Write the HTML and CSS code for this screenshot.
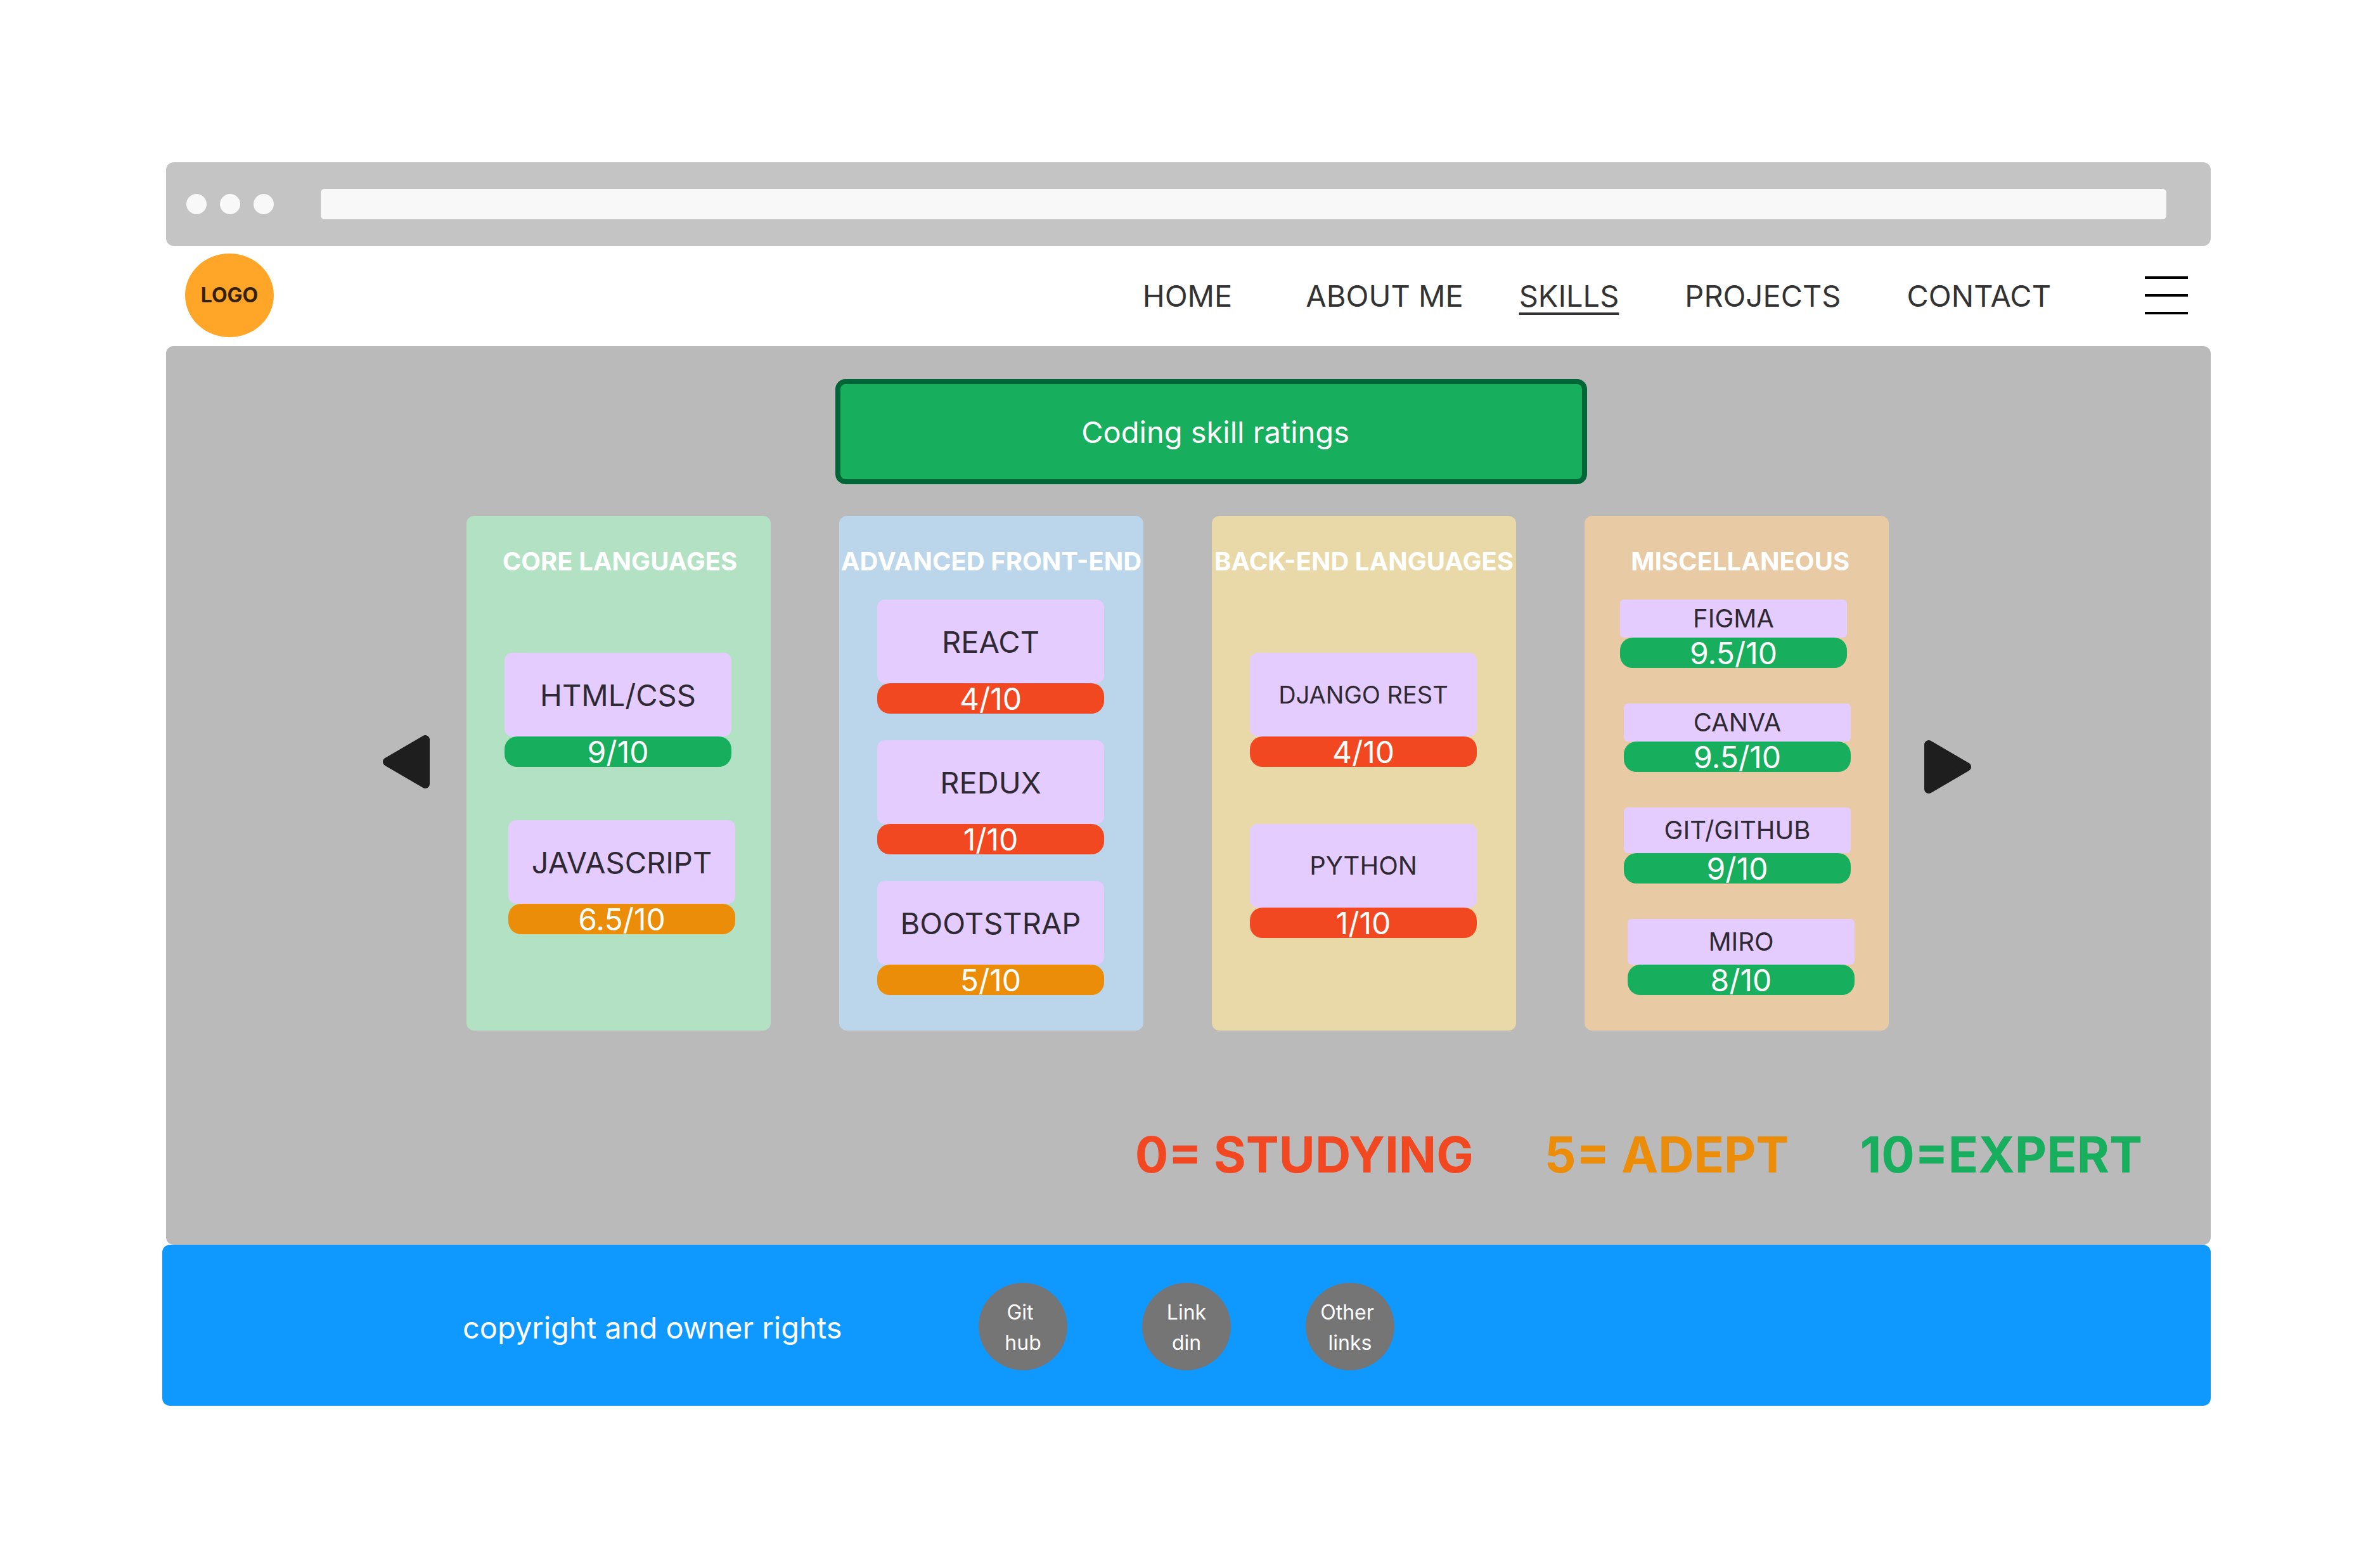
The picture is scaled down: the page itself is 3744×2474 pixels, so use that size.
FILE: index.html
```html
<!DOCTYPE html>
<html lang="en">
<head>
<meta charset="utf-8">
<title>Skills</title>
<link rel="stylesheet" href="styles.css">
</head>
<body>
<div class="window">
  <div class="browser-bar">
    <div class="dots"><span class="dot"></span><span class="dot"></span><span class="dot"></span></div>
    <input class="address" type="text" aria-label="Address">
  </div>

  <header class="header">
    <a class="logo" href="#">LOGO</a>
    <nav class="nav">
      <a class="nav-link nav-home" href="#">HOME</a>
      <a class="nav-link nav-about" href="#">ABOUT ME</a>
      <a class="nav-link active" href="#">SKILLS</a>
      <a class="nav-link" href="#">PROJECTS</a>
      <a class="nav-link" href="#">CONTACT</a>
    </nav>
    <button class="burger" type="button" aria-label="Menu"><span></span><span></span><span></span></button>
  </header>

  <main class="main">
    <h1 class="title">&nbsp;Coding skill ratings</h1>

    <div class="carousel">
      <button class="arrow prev" type="button" aria-label="Previous">
        <svg width="74" height="84" viewBox="0 0 74 84"><path d="M67 7V77L7 42Z" fill="#1e1e1e" stroke="#1e1e1e" stroke-width="14" stroke-linejoin="round"/></svg>
      </button>

      <div class="cards">
        <section class="card core">
          <h2 class="card-title">CORE LANGUAGES</h2>
          <div class="skill"><div class="name">HTML/CSS</div><div class="score high">9/10</div></div>
          <div class="skill end"><div class="name">JAVASCRIPT</div><div class="score mid">6.5/10</div></div>
        </section>

        <section class="card front">
          <h2 class="card-title">ADVANCED FRONT-END</h2>
          <div class="skill"><div class="name">REACT</div><div class="score low">4/10</div></div>
          <div class="skill"><div class="name">REDUX</div><div class="score low">1/10</div></div>
          <div class="skill"><div class="name">BOOTSTRAP</div><div class="score mid">5/10</div></div>
        </section>

        <section class="card back">
          <h2 class="card-title">BACK-END LANGUAGES</h2>
          <div class="skill"><div class="name long">DJANGO REST</div><div class="score low">4/10</div></div>
          <div class="skill"><div class="name">PYTHON</div><div class="score low">1/10</div></div>
        </section>

        <section class="card misc">
          <h2 class="card-title">&nbsp;MISCELLANEOUS</h2>
          <div class="skill"><div class="name short">FIGMA</div><div class="score high">9.5/10</div></div>
          <div class="skill center"><div class="name short">CANVA</div><div class="score high">9.5/10</div></div>
          <div class="skill center"><div class="name">GIT/GITHUB</div><div class="score high">9/10</div></div>
          <div class="skill end"><div class="name">MIRO</div><div class="score high">8/10</div></div>
        </section>
      </div>

      <button class="arrow next" type="button" aria-label="Next">
        <svg width="74" height="84" viewBox="0 0 74 84"><path d="M7 7V77L67 42Z" fill="#1e1e1e" stroke="#1e1e1e" stroke-width="14" stroke-linejoin="round"/></svg>
      </button>
    </div>

    <div class="legend">
      <span class="studying">0= STUDYING</span>
      <span class="adept">5= ADEPT</span>
      <span class="expert">10=EXPERT</span>
    </div>
  </main>

  <footer class="footer">
    <p class="copyright">copyright and owner rights</p>
    <div class="socials">
      <a class="social" href="#">Git&nbsp;<br>hub</a>
      <a class="social" href="#">Link<br>din</a>
      <a class="social" href="#">Other&nbsp;<br>links</a>
    </div>
  </footer>
</div>
</body>
</html>
```
FILE: styles.css
```css
* {
  box-sizing: border-box;
}

body {
  margin: 0;
  background: #fff;
  color: #333;
  font-family: Inter, "Liberation Sans", sans-serif;
  font-size: 47px;
  line-height: 48px;
}

h1, h2, p {
  margin: 0;
}

a {
  color: inherit;
  text-decoration: none;
}

button {
  padding: 0;
  border: 0;
  background: none;
  cursor: pointer;
}

.window {
  padding: 256px;
}

.browser-bar,
.header,
.main {
  margin-left: 6px;
}

/* Browser chrome */
.browser-bar {
  display: flex;
  align-items: center;
  gap: 74px;
  padding: 42px 70px 42px 32px;
  border-radius: 12px;
  background: #c4c4c4;
}

.dots {
  display: flex;
  gap: 21px;
}

.dot {
  width: 32px;
  height: 32px;
  border-radius: 50%;
  background: #f8f8f8;
}

.address {
  flex: 1;
  height: 48px;
  padding: 0 16px;
  border: 0;
  border-radius: 6px;
  background: #f8f8f8;
  font: inherit;
  font-size: 32px;
}

/* Site header */
.header {
  display: flex;
  align-items: center;
  padding: 12px 36px 14px 30px;
}

.logo {
  display: grid;
  place-items: center;
  width: 140px;
  height: 132px;
  border-radius: 50%;
  background: #ffa629;
  color: #33210a;
  font-size: 32px;
  font-weight: 700;
}

.nav {
  display: flex;
  gap: 104px;
  margin-left: auto;
  padding-top: 2px;
}

.nav-home {
  margin-right: 12px;
}

.nav-about {
  margin-right: -16px;
}

.active {
  text-decoration: underline;
  text-decoration-thickness: 4px;
  text-underline-offset: 9px;
}

.burger {
  display: grid;
  gap: 24px;
  width: 68px;
  margin-left: 148px;
}

.burger span {
  height: 4px;
  background: #000;
}

/* Skills panel */
.main {
  padding: 52px 0 94px;
  border-radius: 12px;
  background: #bababa;
}

.title {
  margin: 0 984px 50px 1056px;
  padding: 52px 0 50px;
  border: 8px solid #006637;
  border-radius: 16px;
  background: #17ae5d;
  color: #fff;
  font-size: 47px;
  font-weight: 400;
  text-align: center;
}

.carousel {
  display: flex;
  align-items: flex-start;
  padding: 0 378px 0 342px;
}

.arrow svg {
  display: block;
}

.prev {
  margin: 346px 58px 0 0;
}

.next {
  margin: 354px 0 0 56px;
}

.cards {
  display: grid;
  flex: 1;
  grid-template-columns: repeat(4, minmax(0, 1fr));
  gap: 108px;
}

.card {
  display: flex;
  flex-direction: column;
  align-items: flex-start;
  padding: 48px 60px 56px;
  border-radius: 12px;
}

.card-title {
  align-self: center;
  color: #fff;
  font-size: 40px;
  font-weight: 700;
  white-space: nowrap;
}

.core {
  gap: 84px;
  padding-right: 56px;
  background: #b2e2c3;
}

.front {
  gap: 42px;
  background: #bbd6ea;
}

.back {
  gap: 90px;
  background: #e9d9a8;
}

.misc {
  gap: 56px;
  padding-right: 54px;
  padding-left: 56px;
  background: #e8caa4;
}

.core .card-title {
  margin-bottom: 36px;
}

.back .card-title {
  margin-bottom: 30px;
}

.front .card-title {
  margin-bottom: -6px;
}

.misc .card-title {
  margin-bottom: -20px;
}

.skill {
  width: 358px;
  text-align: center;
}

.skill.center {
  align-self: center;
}

.skill.end {
  align-self: flex-end;
}

.name {
  padding: 43px 0 41px;
  border-radius: 12px;
  background: #e4ccff;
  color: #2f2933;
}

.back .name,
.misc .name {
  font-size: 40px;
}

.back .name {
  padding: 42px 0;
}

.back .long {
  font-size: 38px;
}

.misc .name {
  padding: 12px 0;
  border-radius: 6px;
}

.misc .short {
  padding: 6px 0;
}

.score {
  padding-top: 1px;
  border-radius: 20px;
  color: #fff;
  font-size: 48px;
  line-height: 47px;
}

.high {
  background: #17ae5d;
}

.mid {
  background: #eb8d08;
}

.low {
  background: #f24822;
}

.legend {
  display: flex;
  justify-content: flex-end;
  gap: 112px;
  padding: 148px 108px 0 0;
  font-size: 78px;
  font-weight: 700;
  line-height: 96px;
}

.studying {
  color: #f24822;
}

.adept {
  color: #eb8d08;
}

.expert {
  color: #17ae5d;
}

/* Footer */
.footer {
  display: flex;
  align-items: center;
  gap: 214px;
  padding: 60px 474px 56px;
  border-radius: 12px;
  background: #0f99ff;
  color: #fff;
}

.copyright {
  flex: none;
  width: 600px;
  padding-top: 4px;
  white-space: nowrap;
}

.socials {
  display: flex;
  gap: 118px;
}

.social {
  display: grid;
  place-content: center;
  width: 140px;
  height: 138px;
  padding-top: 3px;
  border-radius: 50%;
  background: #757575;
  font-size: 32px;
  text-align: center;
}
```
